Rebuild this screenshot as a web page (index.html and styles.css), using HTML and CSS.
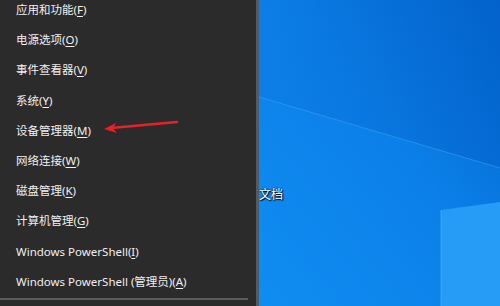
FILE: index.html
```html
<!DOCTYPE html>
<html lang="zh-CN">
<head>
<meta charset="utf-8">
<link rel="stylesheet" href="styles.css">
</head>
<body>
<div class="screen">
  <nav class="menu">
    <ul class="items">
      <li>应用和功能(<u>F</u>)</li>
      <li>电源选项(<u>O</u>)</li>
      <li>事件查看器(<u>V</u>)</li>
      <li>系统(<u>Y</u>)</li>
      <li>设备管理器(<u>M</u>)</li>
      <li>网络连接(<u>W</u>)</li>
      <li>磁盘管理(<u>K</u>)</li>
      <li>计算机管理(<u>G</u>)</li>
      <li>Windows PowerShell(<u>I</u>)</li>
      <li>Windows PowerShell (管理员)(<u>A</u>)</li>
    </ul>
    <div class="sep"></div>
    <svg class="arrow" width="90" height="20" viewBox="0 0 90 20">
      <path d="M76 6 L10 12" stroke="#e8202a" stroke-width="2.4" stroke-linecap="round" fill="none"/>
      <path d="M3 13 L15 7 L12 12.5 L16 17 Z" fill="#e8202a"/>
    </svg>
  </nav>
  <main class="desktop">
    <svg class="wall" width="241" height="306" viewBox="0 0 241 306" preserveAspectRatio="none">
      <defs>
        <linearGradient id="bg" x1="0" y1="1" x2="1" y2="0">
          <stop offset="0" stop-color="#108df1"/>
          <stop offset="0.55" stop-color="#0b80e8"/>
          <stop offset="1" stop-color="#0463cd"/>
        </linearGradient>
        <linearGradient id="top" x1="0" y1="0" x2="1" y2="0">
          <stop offset="0" stop-color="#0c7ae2"/>
          <stop offset="1" stop-color="#0260c9"/>
        </linearGradient>
      </defs>
      <rect width="241" height="306" fill="url(#bg)"/>
      <path d="M0 0 H241 V168 L0 97 Z" fill="url(#top)" opacity="0.5"/>
      <path d="M0 97 L241 168" stroke="#3aa0f2" stroke-width="1" opacity="0.6"/>
      <path d="M182 210 L241 202 V306 H182 Z" fill="#279cf6"/>
      <path d="M182 210 V306" stroke="#4ab2fa" stroke-width="1" opacity="0.7"/>
    </svg>
    <span class="label">文档</span>
  </main>
</div>
</body>
</html>
```

FILE: styles.css
```css
html, body {
  margin: 0;
  padding: 0;
}
body {
  width: 500px;
  height: 306px;
  overflow: hidden;
  font-family: "Noto Sans", "Noto Sans CJK SC", sans-serif;
}
.screen {
  display: flex;
  width: 500px;
  height: 306px;
}
.menu {
  position: relative;
  width: 256px;
  flex: none;
  background: #2b2b2b;
  border-right: 3px solid #595959;
  display: flex;
  flex-direction: column;
}
.items {
  list-style: none;
  margin: -5px 0 0 0;
  padding: 0;
}
.items li {
  height: 30.2px;
  line-height: 30px;
  padding-left: 16px;
  color: #f0f0f0;
  font-size: 11.5px;
  white-space: nowrap;
}
.items u {
  text-decoration-thickness: 1px;
  text-underline-offset: 2px;
}
.sep {
  margin-top: 1px;
  width: 248px;
  height: 2px;
  background: #5c5c5c;
}
.arrow {
  position: absolute;
  left: 101px;
  top: 116px;
}
.desktop {
  position: relative;
  flex: 1;
  overflow: hidden;
}
.wall {
  display: block;
}
.label {
  position: absolute;
  left: 0;
  top: 185px;
  color: #ffffff;
  font-size: 12px;
  font-family: "Noto Sans CJK SC", sans-serif;
  text-shadow: 0 0 2px #000, 1px 1px 1px #000;
}
```
